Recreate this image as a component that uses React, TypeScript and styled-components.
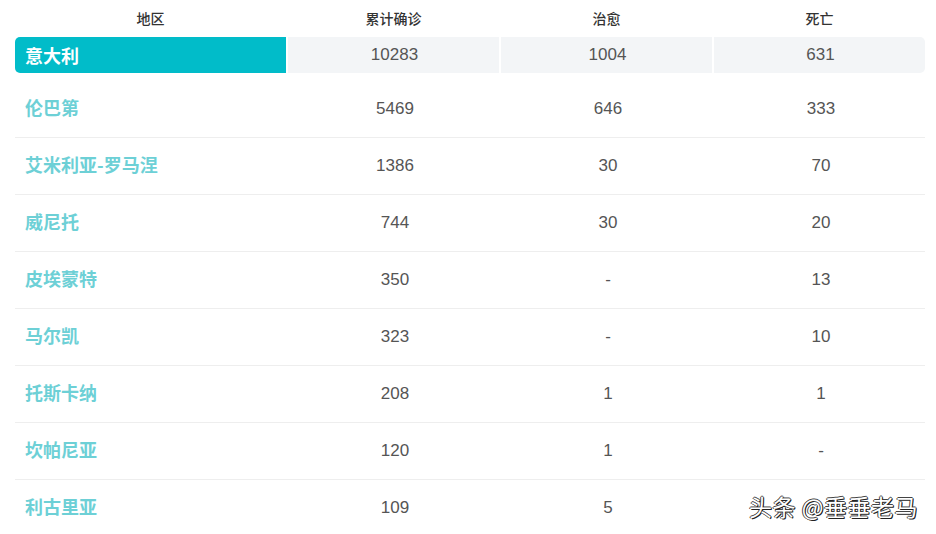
import React from 'react';
import styled, { createGlobalStyle } from 'styled-components';

const GlobalStyle = createGlobalStyle`
    body {
        margin: 0;
        background: #ffffff;
        font-family: "Liberation Sans", "Noto Sans CJK SC", sans-serif;
    }
`;

type Row = { name: string; total: string; cured: string; dead: string };

const rows: Row[] = [
    { name: '伦巴第', total: '5469', cured: '646', dead: '333' },
    { name: '艾米利亚-罗马涅', total: '1386', cured: '30', dead: '70' },
    { name: '威尼托', total: '744', cured: '30', dead: '20' },
    { name: '皮埃蒙特', total: '350', cured: '-', dead: '13' },
    { name: '马尔凯', total: '323', cured: '-', dead: '10' },
    { name: '托斯卡纳', total: '208', cured: '1', dead: '1' },
    { name: '坎帕尼亚', total: '120', cured: '1', dead: '-' },
    { name: '利古里亚', total: '109', cured: '5', dead: '' },
];

const Page = styled.div`
    position: relative;
    width: 936px;
    height: 534px;
    overflow: hidden;
    padding: 0 11px 0 15px;
    box-sizing: border-box;
`;

const Grid = styled.div`
    display: grid;
    grid-template-columns: 271px repeat(3, 1fr);
    column-gap: 2px;
`;

const HeadRow = styled(Grid)`
    height: 35px;
    align-items: center;
`;

const HeadCell = styled.div`
    text-align: center;
    font-family: "Noto Sans CJK SC", sans-serif;
    font-size: 14px;
    font-weight: 500;
    color: #333333;
`;

const TopRow = styled(Grid)`
    height: 36px;
    margin-top: 2px;
    margin-bottom: 8px;
`;

const TopName = styled.div`
    background: #01bcc9;
    border-radius: 5px 0 0 5px;
    display: flex;
    align-items: center;
    padding-left: 10px;
    color: #ffffff;
    font-family: "Noto Sans CJK SC", sans-serif;
    font-weight: 700;
    font-size: 18px;
`;

const TopCell = styled.div<{ $last?: boolean }>`
    background: #f3f5f7;
    border-radius: ${p => (p.$last ? '0 5px 5px 0' : '0')};
    display: flex;
    align-items: center;
    justify-content: center;
    padding-left: 2px;
    font-size: 17px;
    color: #555555;
`;

const DataRow = styled(Grid)<{ $last?: boolean }>`
    height: 56px;
    align-items: center;
    border-bottom: 1px solid ${p => (p.$last ? 'transparent' : '#eeeeee')};
`;

const Name = styled.div`
    padding-left: 10px;
    margin-top: -4px;
    color: #6dd0d6;
    font-family: "Noto Sans CJK SC", sans-serif;
    font-weight: 700;
    font-size: 18px;
`;

const Num = styled.div`
    text-align: center;
    padding-left: 3px;
    margin-top: -1px;
    font-size: 17px;
    color: #555555;
`;

const Watermark = styled.div`
    position: absolute;
    left: 749px;
    top: 489px;
    font-family: "Noto Sans CJK SC", sans-serif;
    font-size: 23px;
    color: #ffffff;
    letter-spacing: 0.5px;
    text-shadow: 1px 1px 0 #222, -1px 0 0 #444, 0 -1px 0 #444, 1px 0 0 #444;
`;

const App = () => {
    return (
        <Page>
            <GlobalStyle />
            <HeadRow>
                <HeadCell>地区</HeadCell>
                <HeadCell>累计确诊</HeadCell>
                <HeadCell>治愈</HeadCell>
                <HeadCell>死亡</HeadCell>
            </HeadRow>
            <TopRow>
                <TopName>意大利</TopName>
                <TopCell>10283</TopCell>
                <TopCell>1004</TopCell>
                <TopCell $last>631</TopCell>
            </TopRow>
            {rows.map((r, i) => (
                <DataRow key={r.name} $last={i === rows.length - 1}>
                    <Name>{r.name}</Name>
                    <Num>{r.total}</Num>
                    <Num>{r.cured}</Num>
                    <Num>{r.dead}</Num>
                </DataRow>
            ))}
            <Watermark>头条 @垂垂老马</Watermark>
        </Page>
    );
};

export default App;
